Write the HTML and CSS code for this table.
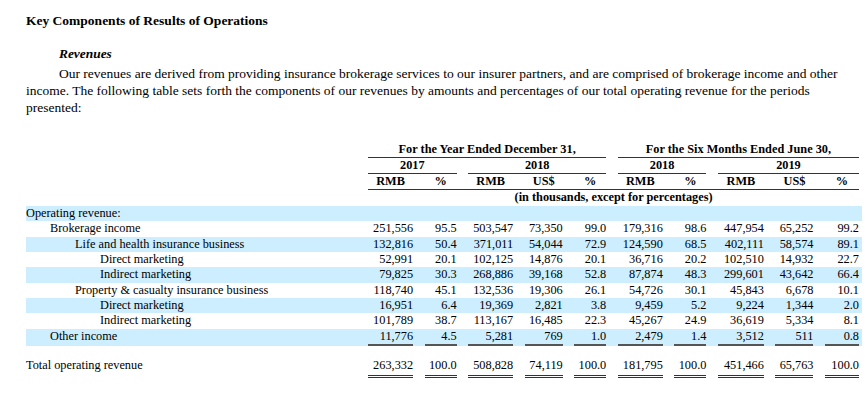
FILE: index.html
```html
<!DOCTYPE html>
<html lang="en">
<head>
<meta charset="utf-8">
<title>Key Components of Results of Operations</title>
<link rel="stylesheet" href="styles.css">
</head>
<body>
<div class="page">
  <h1 class="title">Key Components of Results of Operations</h1>
  <h2 class="subtitle">Revenues</h2>
  <p class="intro">Our revenues are derived from providing insurance brokerage services to our insurer partners, and are comprised of brokerage income and other income. The following table sets forth the components of our revenues by amounts and percentages of our total operating revenue for the periods presented:</p>

  <div class="table">
    <div class="row hrow">
      <div></div>
      <div class="h span5 rule">For the Year Ended December 31,</div>
      <div class="h span5 rule">For the Six Months Ended June 30,</div>
    </div>
    <div class="row hrow">
      <div></div>
      <div class="h span2 rule">2017</div>
      <div class="h span3 rule">2018</div>
      <div class="h span2 rule">2018</div>
      <div class="h span3 rule">2019</div>
    </div>
    <div class="row hrow">
      <div></div>
      <div class="h">RMB</div>
      <div class="h">%</div>
      <div class="h">RMB</div>
      <div class="h">US$</div>
      <div class="h">%</div>
      <div class="h">RMB</div>
      <div class="h">%</div>
      <div class="h">RMB</div>
      <div class="h">US$</div>
      <div class="h">%</div>
    </div>
    <div class="row hrow">
      <div></div>
      <div class="h span10 unit">(in thousands, except for percentages)</div>
    </div>

    <div class="row data band">
      <div class="lbl">Operating revenue:</div>
    </div>
    <div class="row data">
      <div class="lbl l1">Brokerage income</div>
      <div class="num">251,556</div><div class="num">95.5</div><div class="num">503,547</div><div class="num">73,350</div><div class="num">99.0</div><div class="num">179,316</div><div class="num">98.6</div><div class="num">447,954</div><div class="num">65,252</div><div class="num">99.2</div>
    </div>
    <div class="row data band">
      <div class="lbl l2">Life and health insurance business</div>
      <div class="num">132,816</div><div class="num">50.4</div><div class="num">371,011</div><div class="num">54,044</div><div class="num">72.9</div><div class="num">124,590</div><div class="num">68.5</div><div class="num">402,111</div><div class="num">58,574</div><div class="num">89.1</div>
    </div>
    <div class="row data">
      <div class="lbl l3">Direct marketing</div>
      <div class="num">52,991</div><div class="num">20.1</div><div class="num">102,125</div><div class="num">14,876</div><div class="num">20.1</div><div class="num">36,716</div><div class="num">20.2</div><div class="num">102,510</div><div class="num">14,932</div><div class="num">22.7</div>
    </div>
    <div class="row data band">
      <div class="lbl l3">Indirect marketing</div>
      <div class="num">79,825</div><div class="num">30.3</div><div class="num">268,886</div><div class="num">39,168</div><div class="num">52.8</div><div class="num">87,874</div><div class="num">48.3</div><div class="num">299,601</div><div class="num">43,642</div><div class="num">66.4</div>
    </div>
    <div class="row data">
      <div class="lbl l2">Property &amp; casualty insurance business</div>
      <div class="num">118,740</div><div class="num">45.1</div><div class="num">132,536</div><div class="num">19,306</div><div class="num">26.1</div><div class="num">54,726</div><div class="num">30.1</div><div class="num">45,843</div><div class="num">6,678</div><div class="num">10.1</div>
    </div>
    <div class="row data band">
      <div class="lbl l3">Direct marketing</div>
      <div class="num">16,951</div><div class="num">6.4</div><div class="num">19,369</div><div class="num">2,821</div><div class="num">3.8</div><div class="num">9,459</div><div class="num">5.2</div><div class="num">9,224</div><div class="num">1,344</div><div class="num">2.0</div>
    </div>
    <div class="row data">
      <div class="lbl l3">Indirect marketing</div>
      <div class="num">101,789</div><div class="num">38.7</div><div class="num">113,167</div><div class="num">16,485</div><div class="num">22.3</div><div class="num">45,267</div><div class="num">24.9</div><div class="num">36,619</div><div class="num">5,334</div><div class="num">8.1</div>
    </div>
    <div class="row data band sub">
      <div class="lbl l1">Other income</div>
      <div class="num">11,776</div><div class="num">4.5</div><div class="num">5,281</div><div class="num">769</div><div class="num">1.0</div><div class="num">2,479</div><div class="num">1.4</div><div class="num">3,512</div><div class="num">511</div><div class="num">0.8</div>
    </div>
    <div class="spacer"></div>
    <div class="row data total">
      <div class="lbl">Total operating revenue</div>
      <div class="num">263,332</div><div class="num">100.0</div><div class="num">508,828</div><div class="num">74,119</div><div class="num">100.0</div><div class="num">181,795</div><div class="num">100.0</div><div class="num">451,466</div><div class="num">65,763</div><div class="num">100.0</div>
    </div>
  </div>
</div>
</body>
</html>
```

FILE: styles.css
```css
* {
  box-sizing: border-box;
}

body {
  margin: 0;
  background: #ffffff;
  color: #000000;
  font-family: "Liberation Serif", "Times New Roman", serif;
}

.page {
  padding: 13px 3px 0 26px;
}

.title {
  margin: 0;
  font-size: 13.5px;
  line-height: 16px;
  font-weight: bold;
}

.subtitle {
  margin: 17px 0 0 33px;
  font-size: 13.4px;
  line-height: 16px;
  font-weight: bold;
  font-style: italic;
}

.intro {
  margin: 3px 0 0;
  font-size: 13.5px;
  line-height: 17px;
  text-indent: 33px;
}

.table {
  margin-top: 26px;
  font-size: 12.3px;
}

.row {
  display: grid;
  grid-template-columns: 1fr 45px 32px 45px 38px 32px 45px 32px 46px 38px 34px;
  column-gap: 11.55px;
  padding-right: 3px;
}

.hrow {
  line-height: 15px;
  font-weight: bold;
  text-align: center;
}

.rule {
  border-bottom: 1px solid #333333;
}

.span2 { grid-column: span 2; }
.span3 { grid-column: span 3; }
.span5 { grid-column: span 5; }
.span10 { grid-column: span 10; }

.unit {
  border-top: 1px solid #333333;
  padding-bottom: 1px;
}

.data {
  line-height: 15.33px;
}

.band {
  background: #cceeff;
}

.lbl {
  white-space: nowrap;
}

.l1 { padding-left: 24px; }
.l2 { padding-left: 49px; }
.l3 { padding-left: 74px; }

.num {
  text-align: right;
  white-space: nowrap;
}

.sub .num {
  border-bottom: 2px solid #555555;
}

.spacer {
  height: 12px;
}

.total .num {
  border-bottom: 3px double #333333;
  padding-bottom: 1.5px;
}
```
